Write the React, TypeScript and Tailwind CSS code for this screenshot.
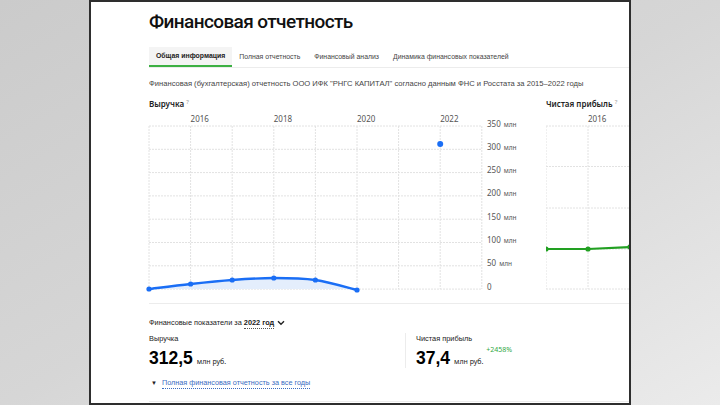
import React from 'react';

type Pt = [number, number];

// catmull-rom -> bezier, gives the soft line like in the chart lib
function smoothPath(pts: Pt[]) {
  let d = `M${pts[0][0]},${pts[0][1]}`;
  for (let i = 0; i < pts.length - 1; i++) {
    const p0 = pts[i - 1] || pts[i];
    const p1 = pts[i];
    const p2 = pts[i + 1];
    const p3 = pts[i + 2] || p2;
    const c1x = p1[0] + (p2[0] - p0[0]) / 6;
    const c1y = p1[1] + (p2[1] - p0[1]) / 6;
    const c2x = p2[0] - (p3[0] - p1[0]) / 6;
    const c2y = p2[1] - (p3[1] - p1[1]) / 6;
    d += ` C${c1x},${c1y} ${c2x},${c2y} ${p2[0]},${p2[1]}`;
  }
  return d;
}

const COL = 41.6;
const FONT = '"Noto Sans", "Liberation Sans", sans-serif';
const UI = '"Liberation Sans", Arial, sans-serif';

function RevenueChart() {
  const rows = [350, 300, 250, 200, 150, 100, 50, 0];
  const rowY = (i: number) => 15 + i * 23.3;
  const pts: Pt[] = [
    [0, 178],
    [COL, 173],
    [COL * 2, 169],
    [COL * 3, 167],
    [COL * 4, 169],
    [COL * 5, 179],
  ];
  const line = smoothPath(pts);
  const area = `${line} L${COL * 5},178 L0,178 Z`;
  return (
    <svg width="392" height="182" className="block overflow-visible" style={{ fontFamily: FONT }}>
      {Array.from({ length: 9 }).map((_, i) => (
        <line key={`v${i}`} x1={i * COL} x2={i * COL} y1={15} y2={178} stroke="#e2e2e2" strokeDasharray="2 1" />
      ))}
      {rows.map((_, i) => (
        <line key={`h${i}`} x1={0} x2={COL * 8} y1={rowY(i)} y2={rowY(i)} stroke="#e2e2e2" strokeDasharray="2 1" />
      ))}
      {['2016', '2018', '2020', '2022'].map((y, i) => (
        <text key={y} x={COL * (1 + i * 2)} y={11} fontSize="8" fill="#555">
          {y}
        </text>
      ))}
      {rows.map((v, i) => (
        <text key={`l${v}`} x={338} y={rowY(i) + 0.5} fontSize="8" fill="#555">
          {v}
          {v !== 0 && (
            <tspan fontSize="6.5" dx="3">
              млн
            </tspan>
          )}
        </text>
      ))}
      <path d={area} fill="#e4eefc" />
      <path d={line} fill="none" stroke="#1a6ef5" strokeWidth="2.4" />
      {pts.map(([x, y]) => (
        <circle key={x} cx={x} cy={y} r="2.6" fill="#1a6ef5" />
      ))}
      <circle cx={COL * 7} cy={33} r="3" fill="#1a6ef5" />
    </svg>
  );
}

function ProfitChart() {
  const rowY = [15, 55.5, 97, 138, 178];
  const pts: Pt[] = [
    [0, 138],
    [42, 138],
    [84, 136],
  ];
  return (
    <svg width="120" height="182" className="block" style={{ fontFamily: FONT }}>
      {[0, 42, 84].map((x) => (
        <line key={x} x1={x} x2={x} y1={15} y2={178} stroke="#e2e2e2" strokeDasharray="2 1" />
      ))}
      {rowY.map((y) => (
        <line key={y} x1={0} x2={120} y1={y} y2={y} stroke="#e2e2e2" strokeDasharray="2 1" />
      ))}
      <text x={42} y={11} fontSize="8" fill="#555">
        2016
      </text>
      <polyline points={pts.map((p) => p.join(',')).join(' ')} fill="none" stroke="#22a022" strokeWidth="2.2" />
      {pts.map(([x, y]) => (
        <circle key={x} cx={x} cy={y} r="2.6" fill="#22a022" />
      ))}
    </svg>
  );
}

const tabs = ['Общая информация', 'Полная отчетность', 'Финансовый анализ', 'Динамика финансовых показателей'];

function Metric({ label, value, delta }: { label: string; value: string; delta?: string }) {
  return (
    <div className="flex">
      <div>
        <div className="text-[7.4px] leading-[12px] text-[#222]" style={{ fontFamily: UI }}>
          {label}
        </div>
        <div className="mt-[3px] flex items-baseline gap-[4px]">
          <span className="text-[17.5px] leading-[20px] font-bold text-black" style={{ fontFamily: UI }}>
            {value}
          </span>
          <span className="text-[7px] text-[#222]">млн руб.</span>
        </div>
      </div>
      {delta && <div className="ml-[3px] mt-[12px] text-[7px] leading-[10px] text-[#33a845]">{delta}</div>}
    </div>
  );
}

export default function App() {
  return (
    <div className="w-[720px] h-[405px] overflow-hidden flex bg-gradient-to-br from-[#cbcbcb] via-[#d6d6d6] to-[#ebebeb]">
      <div
        className="ml-[89px] w-[542px] h-[405px] shrink-0 border-2 border-[#2e2e2e] bg-white overflow-hidden"
        style={{ fontFamily: FONT }}
      >
        <div className="pl-[58px] pt-[7px] w-[700px]">
          <h1
            className="text-[19px] leading-[26px] font-medium tracking-[-0.6px] text-[#111]"
            style={{ fontFamily: 'Roboto, "Noto Sans", sans-serif' }}
          >
            Финансовая отчетность
          </h1>

          <div className="mt-[12px] flex border-b border-[#ececec]" style={{ fontFamily: UI }}>
            {tabs.map((t, i) => (
              <div
                key={t}
                className={`h-[20px] px-[7px] flex items-center text-[6.9px] ${
                  i === 0 ? 'bg-[#f4f4f4] border-b-2 border-[#3cb043] font-bold text-[#222]' : 'text-[#444]'
                }`}
              >
                {t}
              </div>
            ))}
          </div>

          <p className="mt-[10px] text-[7.6px] leading-[12px] text-[#444]" style={{ fontFamily: UI }}>
            Финансовая (бухгалтерская) отчетность ООО ИФК "РНГС КАПИТАЛ" согласно данным ФНС и Росстата за 2015–2022 годы
          </p>

          <div className="mt-[8px] flex">
            <div className="w-[397px] shrink-0">
              <div className="text-[8px] leading-[12px] font-semibold text-[#222]">
                Выручка <sup className="text-[6px] font-normal text-[#999]">?</sup>
              </div>
              <div className="mt-[1px]">
                <RevenueChart />
              </div>
            </div>
            <div>
              <div className="text-[8px] leading-[12px] font-semibold text-[#222]">
                Чистая прибыль <sup className="text-[6px] font-normal text-[#999]">?</sup>
              </div>
              <div className="mt-[1px]">
                <ProfitChart />
              </div>
            </div>
          </div>

          <div className="mt-[10px] border-t border-[#ececec] w-[486px]" />

          <div className="mt-[13px] text-[7.35px] leading-[12px] text-[#222] flex items-center" style={{ fontFamily: UI }}>
            Финансовые показатели за&nbsp;
            <span className="font-bold border-b border-dotted border-[#555] leading-[10px]">2022 год</span>
            <svg width="8" height="6" viewBox="0 0 8 6" className="ml-[3px]">
              <path d="M1 1.2 L4 4.2 L7 1.2" fill="none" stroke="#222" strokeWidth="1.4" />
            </svg>
          </div>

          <div className="mt-[4px] flex">
            <div className="w-[256px]">
              <Metric label="Выручка" value="312,5" />
            </div>
            <div className="border-l border-[#ececec] pl-[10px] h-[35px]">
              <Metric label="Чистая прибыль" value="37,4" delta="+2458%" />
            </div>
          </div>

          <div className="mt-[9px] flex items-center text-[7.25px] leading-[12px]" style={{ fontFamily: UI }}>
            <span className="text-[6px] text-[#222] ml-[2px] mr-[5px]">▼</span>
            <span className="text-[#3a6cc2] border-b border-dotted border-[#3a6cc2] leading-[10px]">
              Полная финансовая отчетность за все годы
            </span>
          </div>

          <div className="mt-[12px] border-t border-[#ececec] w-[486px]" />
        </div>
      </div>
    </div>
  );
}
